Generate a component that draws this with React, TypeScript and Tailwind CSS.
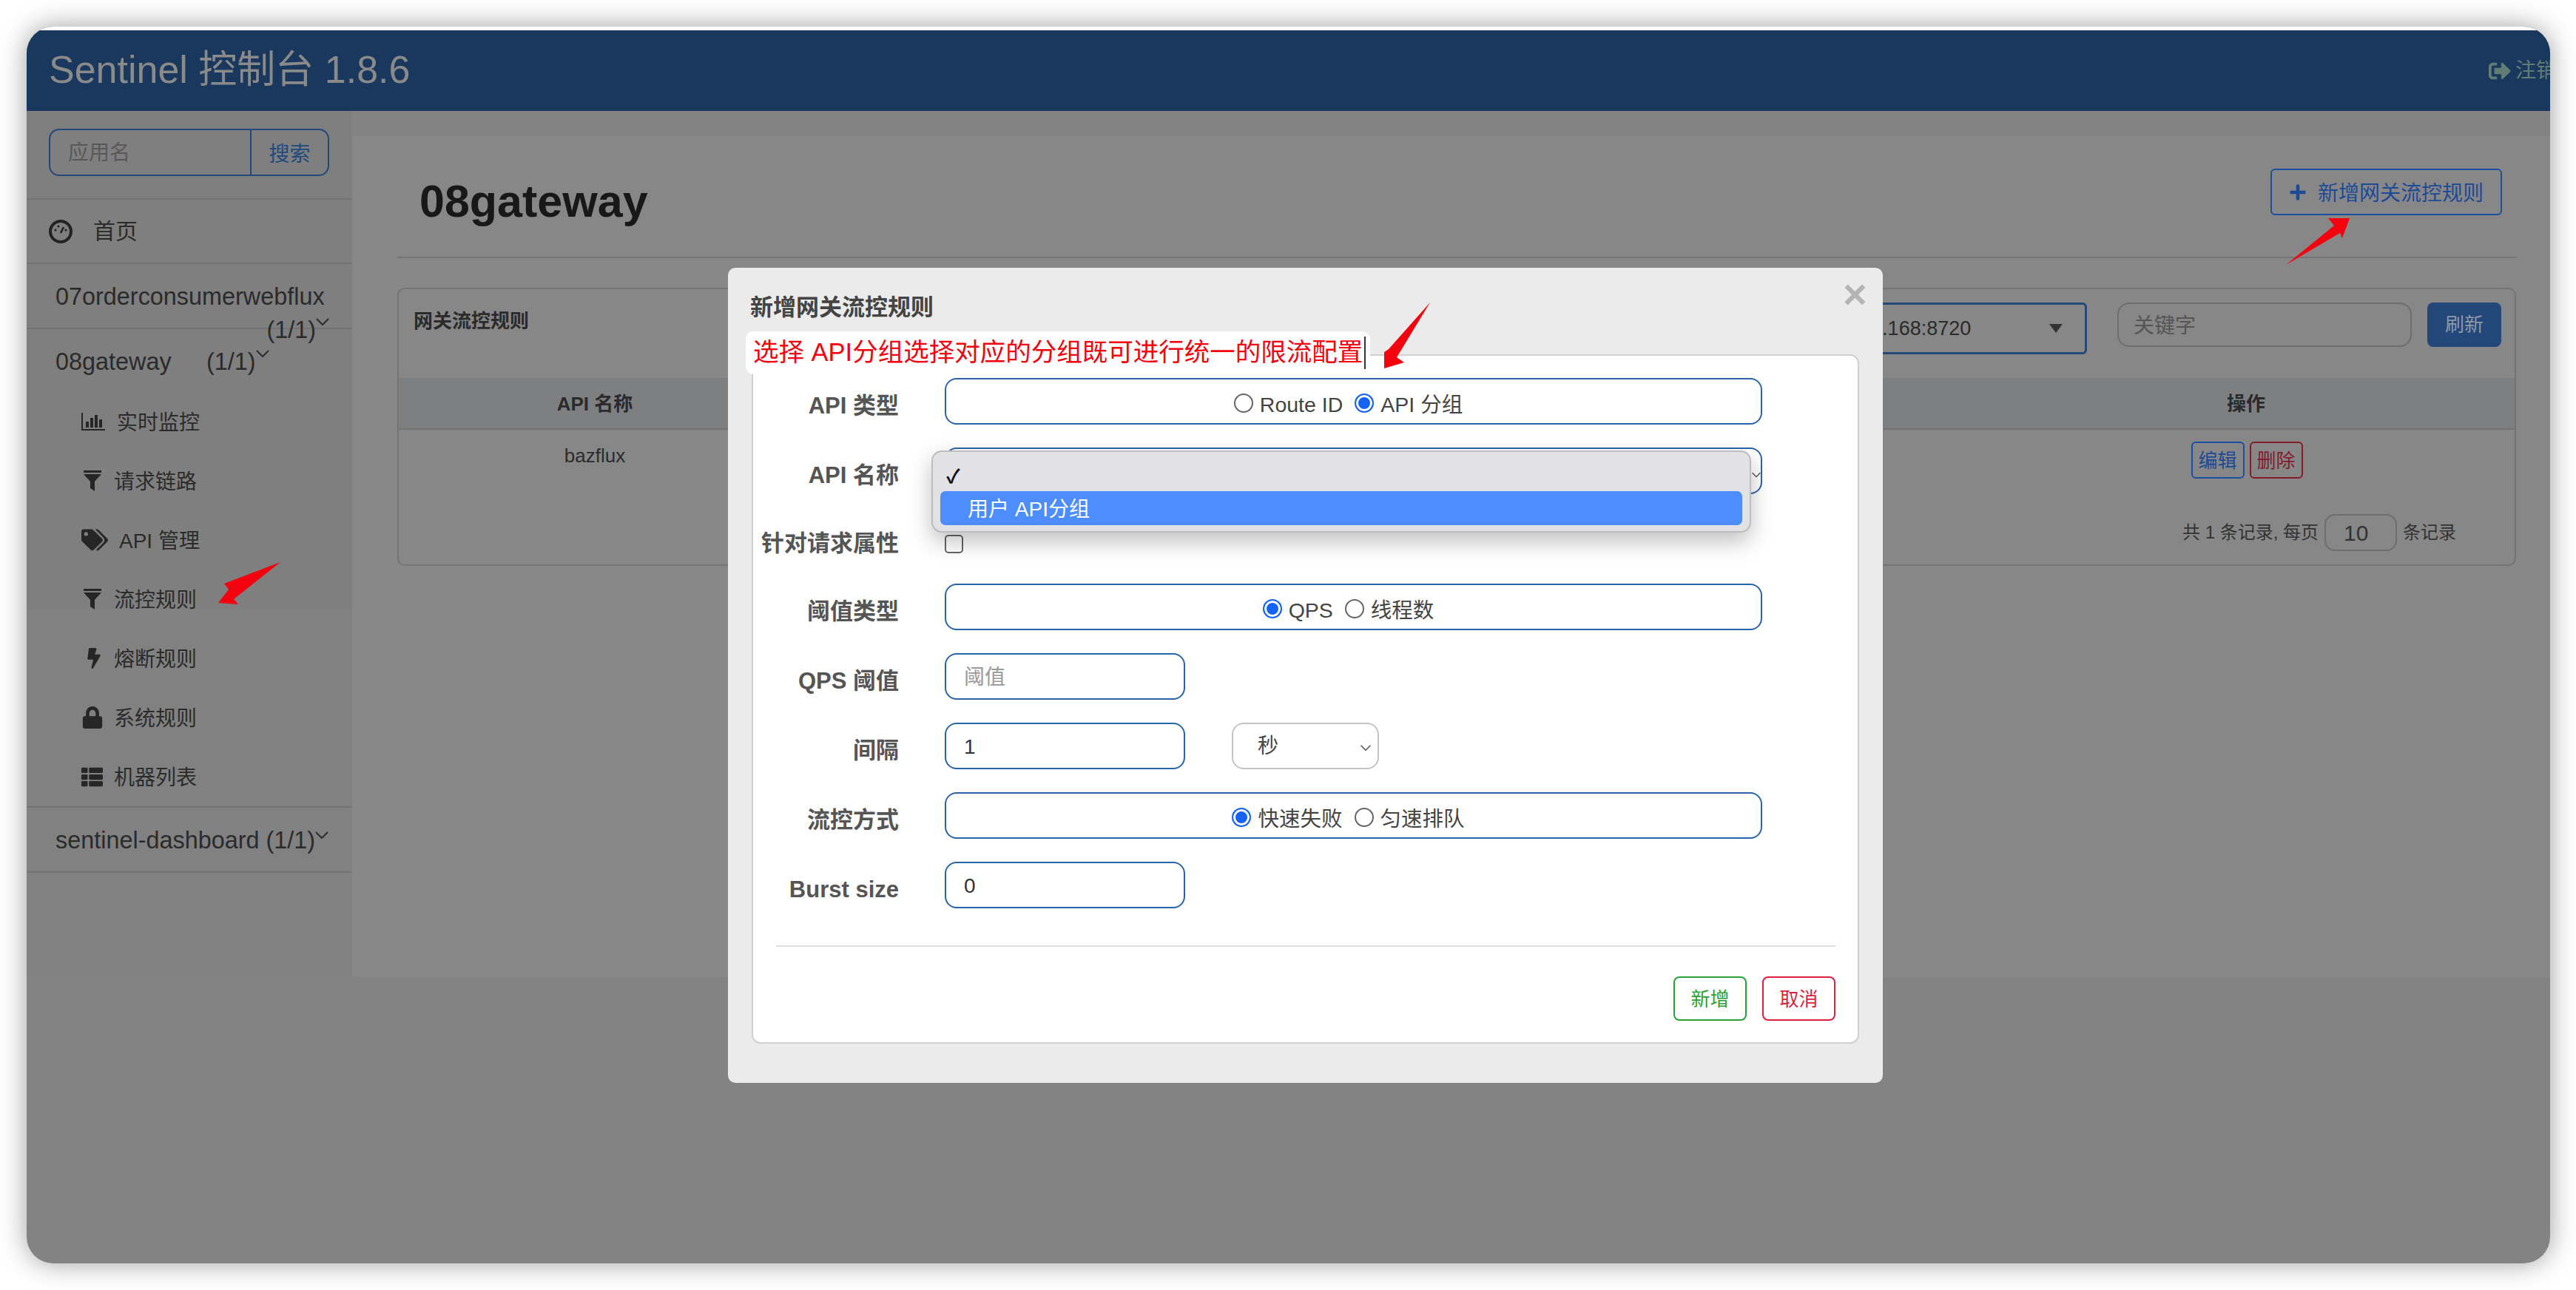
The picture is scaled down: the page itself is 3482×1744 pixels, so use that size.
import { FaBolt, FaLock, FaPlus, FaSignOutAlt, FaTags, FaThList } from 'react-icons/fa';

function Chevron({ className }: { className?: string }) {
  return (
    <svg viewBox="0 0 18 10" className={className} fill="none" stroke="currentColor" strokeWidth="2">
      <path d="M1 1l8 8 8-8" />
    </svg>
  );
}

function Funnel() {
  return (
    <svg viewBox="0 0 24 28" className="ml-[3px] h-[28px] w-[24px] fill-[#262626]">
      <path d="M0 0h24v3H0zM0 5h24L15 15v13l-6-4V15z" />
    </svg>
  );
}

function Gauge() {
  return (
    <svg viewBox="0 0 32 32" className="h-[32px] w-[32px]">
      <circle cx="16" cy="16" r="14" fill="#7e7e7e" stroke="#222" strokeWidth="4" />
      <path d="M16 18l4-8" stroke="#222" strokeWidth="2.5" />
      <circle cx="9" cy="14" r="1.6" fill="#222" />
      <circle cx="13" cy="9" r="1.6" fill="#222" />
      <circle cx="23" cy="14" r="1.6" fill="#222" />
    </svg>
  );
}

function Bars() {
  return (
    <svg viewBox="0 0 32 24" className="h-[24px] w-[32px] fill-[#262626]">
      <path d="M0 0h2v22h30v2H0zM6 12h4v8H6zM12 7h4v13h-4zM18 3h4v17h-4zM24 9h4v11h-4z" />
    </svg>
  );
}

const menu = [
  { label: '实时监控', box: 'w-[48px]', icon: <Bars /> },
  { label: '请求链路', box: 'w-[44px]', icon: <Funnel /> },
  { label: 'API 管理', box: 'w-[51px]', icon: <FaTags size={36} /> },
  { label: '流控规则', box: 'w-[44px]', icon: <Funnel /> },
  { label: '熔断规则', box: 'w-[44px]', icon: <FaBolt size={28} className="ml-[3px]" /> },
  { label: '系统规则', box: 'w-[44px]', icon: <FaLock size={30} /> },
  { label: '机器列表', box: 'w-[44px]', icon: <FaThList size={29} /> },
];

function Sidebar() {
  return (
    <aside className="w-[440px] shrink-0 bg-[linear-gradient(#7f7f7f_0,#7f7f7f_673px,#818181_673px)] text-[#2b2b2b]">
      <div className="h-[120px] border-b-2 border-[#737373] pl-[30px] pt-[24px]">
        <div className="flex h-[64px] w-[379px] rounded-[14px] border-2 border-[#23497a]">
          <div className="flex-1 pl-[24px] pt-[10px] text-[28px] text-[#585858]">应用名</div>
          <div className="w-[105px] border-l-2 border-[#23497a] pt-[12px] text-center text-[28px] text-[#1f4a80]">搜索</div>
        </div>
      </div>
      <div className="flex h-[87px] items-center border-b-2 border-[#737373] pl-[30px] text-[30px]">
        <Gauge />
        <span className="ml-[28px]">首页</span>
      </div>
      <div className="h-[88px] border-b-2 border-[#737373] pl-[39px] pr-[31px] pt-[22px] text-[32.4px] leading-[45px]">
        <div>07orderconsumerwebflux</div>
        <div className="flex justify-end">
          (1/1)
          <Chevron className="mt-[6px] h-[10px] w-[18px]" />
        </div>
      </div>
      <div className="border-b-2 border-[#737373]">
        <div className="flex h-[85px] items-start pl-[39px] pt-[22px] text-[32.4px] leading-[45px]">
          <span className="w-[204px]">08gateway</span>
          <span>(1/1)</span>
          <Chevron className="mt-[6px] h-[10px] w-[18px]" />
        </div>
        {menu.map((item) => (
          <div key={item.label} className="flex h-[80px] items-center pl-[74px] text-[28px]">
            <span className={`flex items-center text-[#262626] ${item.box}`}>{item.icon}</span>
            <span className="pt-[3px]">{item.label}</span>
          </div>
        ))}
      </div>
      <div className="flex h-[88px] items-center border-b-2 border-[#737373] pl-[39px] pt-[2px] text-[32.4px]">
        sentinel-dashboard (1/1)
        <Chevron className="mb-[14px] h-[10px] w-[18px]" />
      </div>
    </aside>
  );
}

function RulesPanel() {
  return (
    <div className="mt-[40px] h-[376px] rounded-[10px] border-2 border-[#747474] text-[#2b2b2b]">
      <div className="flex h-[120px] items-start justify-between pl-[20px] pr-[18px] pt-[18px]">
        <div className="pt-[6px] text-[26px] font-bold">网关流控规则</div>
        <div className="flex">
          <div className="flex h-[70px] w-[450px] items-center justify-between rounded-[6px] border-[3px] border-[#23497a] pl-[50px] pr-[30px] text-[27px]">
            192.168.3.168:8720
            <span className="h-0 w-0 border-x-[9px] border-t-[12px] border-x-transparent border-t-[#333]" />
          </div>
          <div className="ml-[41px] flex h-[60px] w-[398px] items-center rounded-[16px] border-2 border-[#6e6e6e] pl-[20px] pt-[3px] text-[28px] text-[#555]">关键字</div>
          <div className="ml-[21px] flex h-[60px] w-[100px] items-center justify-center rounded-[8px] bg-[#24477a] text-[26px] text-[#8d98a8]">刷新</div>
        </div>
      </div>
      <div className="flex h-[70px] items-center justify-between border-b-2 border-[#737373] bg-[#7e7f81] pt-[2px] text-[26px] font-semibold">
        <div className="w-[530px] text-center">API 名称</div>
        <div className="w-[726px] text-center font-bold">操作</div>
      </div>
      <div className="flex justify-between">
        <div className="w-[530px] pt-[18px] text-center text-[26px] leading-[34px]">bazflux</div>
        <div className="flex w-[726px] flex-col">
          <div className="flex justify-center gap-[7px] pl-[2px] pt-[16px] text-[26px]">
            <span className="flex h-[50px] w-[72px] items-center justify-center rounded-[6px] border-2 border-[#1c4ea0] pt-[2px] text-[#1c4a96]">编辑</span>
            <span className="flex h-[50px] w-[72px] items-center justify-center rounded-[6px] border-2 border-[#851a2b] pt-[2px] text-[#851a2b]">删除</span>
          </div>
          <div className="mt-[48px] flex items-center pl-[277px] text-[24px] text-[#333]">
            共 1 条记录, 每页
            <span className="ml-[8px] mr-[8px] flex h-[50px] w-[98px] items-center rounded-[14px] border-2 border-[#6e6e6e] pl-[24px] text-[30px]">10</span>
            条记录
          </div>
        </div>
      </div>
    </div>
  );
}

function RadioBox({ items }: { items: { label: string; on?: boolean }[] }) {
  return (
    <div className="flex h-full w-[1105px] items-center justify-center gap-[16px] rounded-[16px] border-2 border-[#2a64a8] pr-[14px] pt-[10px] text-[28.5px] text-[#444]">
      {items.map((r) => (
        <label key={r.label} className="flex items-center gap-[9px]">
          <input
            type="radio"
            readOnly
            checked={!!r.on}
            className="mb-[6px] h-[26px] w-[26px] appearance-none rounded-full border-2 border-[#666] checked:border-[#1463f5] checked:bg-[#1463f5] checked:shadow-[inset_0_0_0_3px_white]"
          />
          {r.label}
        </label>
      ))}
    </div>
  );
}

function Field({ value, placeholder }: { value?: string; placeholder?: string }) {
  return (
    <div className={`flex h-full w-[325px] items-center rounded-[16px] border-2 border-[#2a64a8] pl-[24px] pt-[2px] text-[28px] ${value ? 'text-[#333]' : 'text-[#999]'}`}>
      {value ?? placeholder}
    </div>
  );
}

function Row({ label, children, height = 'h-[63px]' }: { label: string; children: React.ReactNode; height?: string }) {
  return (
    <div className={`flex ${height}`}>
      <div className="w-[195px] shrink-0 self-center pt-[12px] text-right text-[31px] font-bold leading-[40px] text-[#555]">{label}</div>
      <div className="ml-[62px]">{children}</div>
    </div>
  );
}

function Modal() {
  return (
    <div className="absolute left-[948px] top-[326px] flex h-[1102px] w-[1561px] flex-col rounded-[10px] bg-[#ebebeb] pl-[32px] pr-[32px]">
      <div className="-ml-[2px] h-[117px] pt-[33px] text-[31px] font-bold leading-[42px] text-[#444]">新增网关流控规则</div>
      <div className="flex h-[932px] flex-col rounded-[12px] border-2 border-[#d0d0d0] bg-white pl-[2px] pt-[30px]">
        <div className="flex flex-col gap-[31px]">
          <Row label="API 类型">
            <RadioBox items={[{ label: 'Route ID' }, { label: 'API 分组', on: true }]} />
          </Row>
          <Row label="API 名称">
            <div className="h-full w-[1105px] rounded-[16px] border-2 border-[#2a64a8]" />
          </Row>
          <Row label="针对请求属性" height="h-[59px]">
            <input type="checkbox" readOnly className="mt-[24px] h-[25px] w-[25px] appearance-none rounded-[5px] border-2 border-[#666] bg-white" />
          </Row>
          <Row label="阈值类型">
            <RadioBox items={[{ label: 'QPS', on: true }, { label: '线程数' }]} />
          </Row>
          <Row label="QPS 阈值">
            <Field placeholder="阈值" />
          </Row>
          <Row label="间隔">
            <div className="flex h-full gap-[63px]">
              <Field value="1" />
              <div className="flex h-full w-[199px] items-center justify-between rounded-[16px] border-2 border-[#c4c4c4] pl-[33px] pr-[8px] text-[28px] text-[#444]">
                秒
                <Chevron className="mt-[4px] h-[8px] w-[16px] text-[#555]" />
              </div>
            </div>
          </Row>
          <Row label="流控方式">
            <RadioBox items={[{ label: '快速失败', on: true }, { label: '匀速排队' }]} />
          </Row>
          <Row label="Burst size">
            <Field value="0" />
          </Row>
        </div>
        <div className="ml-[29px] mr-[30px] mt-[50px] border-t-2 border-[#dedede]" />
        <div className="mr-[30px] mt-[40px] flex justify-end gap-[21px] text-[26px]">
          <span className="flex h-[60px] w-[99px] items-center justify-center rounded-[8px] border-2 border-[#28a138] pt-[2px] text-[#28a138]">新增</span>
          <span className="flex h-[60px] w-[99px] items-center justify-center rounded-[8px] border-2 border-[#dc1f3e] pt-[2px] text-[#dc1f3e]">取消</span>
        </div>
      </div>

      <span className="absolute left-[1507px] top-[10px] text-[56px] font-bold leading-[52px] text-[#b4b4b4]">×</span>

      {/* annotation pasted over the dialog */}
      <div className="absolute left-[24px] top-[86px] flex h-[58px] w-[844px] items-center rounded-[10px] bg-white pl-[10px] text-[34.5px] text-[#f5000f]">
        选择 API分组选择对应的分组既可进行统一的限流配置
        <span className="ml-[2px] h-[44px] w-[2px] bg-[#333]" />
      </div>

      {/* native select popup */}
      <div className="absolute left-[275px] top-[247px] h-[111px] w-[1108px] rounded-[14px] border-2 border-[#bdbdbf] bg-[#e2e2e4] shadow-[0_12px_30px_rgba(0,0,0,0.25)]">
        <div className="h-[53px] pl-[18px] pt-[16px] text-[26px] font-bold leading-[34px] text-[#111]">✓</div>
        <div className="ml-[10px] mr-[10px] flex h-[46px] items-center rounded-[7px] bg-[#4d8dff] pl-[37px] pt-[3px] text-[28px] text-white">用户 API分组</div>
      </div>
      <Chevron className="absolute left-[1384px] top-[276px] h-[8px] w-[12px] text-[#444]" />
    </div>
  );
}

export default function App() {
  return (
    <div className="h-[1744px] w-[3482px] overflow-hidden bg-white pl-[36px] pt-[36px] [font-family:'Liberation_Sans','Noto_Sans_CJK_SC',sans-serif]">
      <div className="relative h-[1672px] w-[3411px] overflow-hidden rounded-[36px] bg-[#838383] shadow-[0_0_36px_rgba(0,0,0,0.38)]">
        <div className="h-[5px] bg-white" />
        <header className="flex h-[109px] items-center justify-between bg-[#1a385d] pl-[30px]">
          <div className="pb-[3px] text-[52px] text-[#8a8a8a]">Sentinel 控制台 1.8.6</div>
          <div className="flex w-[83px] shrink-0 items-center gap-[6px] overflow-hidden whitespace-nowrap text-[28px] text-[#5f7d74]">
            <FaSignOutAlt size={30} className="shrink-0" />
            注销
          </div>
        </header>
        <div className="flex h-[1171px]">
          <Sidebar />
          <main className="mt-[34px] h-[1137px] flex-1 bg-[#878787] pl-[61px] pr-[46px]">
            <div className="flex h-[165px] items-start justify-between border-b-2 border-[#757575]">
              <h1 className="pl-[30px] pt-[50px] text-[61px] font-bold leading-[76px] text-[#181818]">08gateway</h1>
              <div className="mr-[19px] mt-[44px] flex h-[63px] w-[313px] items-center gap-[15px] rounded-[6px] border-2 border-[#1c4ea0] pl-[23px] pt-[5px] text-[28px] text-[#1d4a96]">
                <FaPlus size={24} className="mb-[5px]" />
                新增网关流控规则
              </div>
            </div>
            <RulesPanel />
          </main>
        </div>
        <Modal />
        {/* red annotation arrows */}
        <svg viewBox="36 36 3411 1672" className="pointer-events-none absolute inset-0 h-[1672px] w-[3411px] fill-[#f5000f]">
          <polygon points="1933,409 1877,472 1871,476 1871,498 1898,490 1888,483" />
          <polygon points="3176,295 3147,295 3155,305 3090,358 3163,315 3166,322" />
          <polygon points="379,760 303,789 309,797 295,815 322,817 316,810" />
        </svg>
      </div>
    </div>
  );
}
